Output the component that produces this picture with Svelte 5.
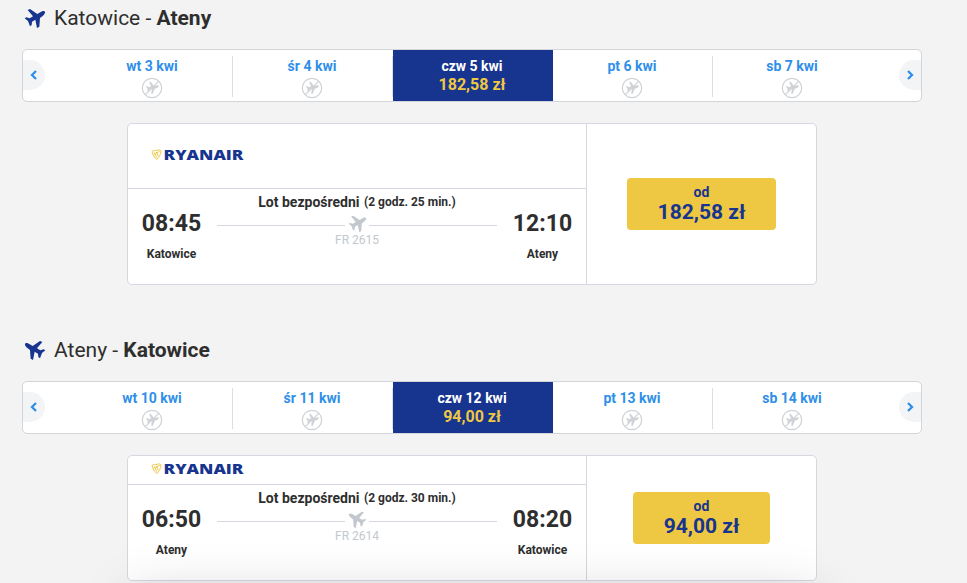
<script>
	const flights = [
		{
			from: 'Katowice',
			to: 'Ateny',
			back: false,
			days: ['wt 3 kwi', 'śr 4 kwi', 'czw 5 kwi', 'pt 6 kwi', 'sb 7 kwi'],
			price: '182,58 zł',
			departure: '08:45',
			arrival: '12:10',
			duration: '2 godz. 25 min.',
			number: 'FR 2615'
		},
		{
			from: 'Ateny',
			to: 'Katowice',
			back: true,
			days: ['wt 10 kwi', 'śr 11 kwi', 'czw 12 kwi', 'pt 13 kwi', 'sb 14 kwi'],
			price: '94,00 zł',
			departure: '06:50',
			arrival: '08:20',
			duration: '2 godz. 30 min.',
			number: 'FR 2614'
		}
	]

	const selected = 2
</script>

{#snippet plane(back)}
	<svg class="plane" class:back viewBox="0 0 66 66">
		<path d="M63 14C61 10 54 12 50 15L40 21 18 6 11 9 27 28 17 34 7 31 2 34 12 42 18 58 23 54 24 44 34 38 39 63 46 59 48 33 57 26C61 22 64 18 63 14z" />
	</svg>
{/snippet}

<main>
	{#each flights as flight}
		<section>
			<h2>
				{@render plane(flight.back)}
				<span>{flight.from} - <b>{flight.to}</b></span>
			</h2>

			<div class="dates">
				<button class="arrow prev" aria-label="prev">
					<svg viewBox="0 0 8 10"><path d="M6 1L2 5l4 4" /></svg>
				</button>
				{#each flight.days as day, i}
					<div class="day" class:selected={i === selected}>
						<span class="name">{day}</span>
						{#if i === selected}
							<span class="day-price">{flight.price}</span>
						{:else}
							<svg class="no-flight" viewBox="0 0 22 22">
								<circle cx="11" cy="11" r="9.700" />
								<g transform="translate(4.300 4.300) scale(.2)">
									<path transform="rotate(18 33 33)" d="M63 14C61 10 54 12 50 15L40 21 18 6 11 9 27 28 17 34 7 31 2 34 12 42 18 58 23 54 24 44 34 38 39 63 46 59 48 33 57 26C61 22 64 18 63 14z" />
								</g>
								<line x1="4.200" y1="17.800" x2="17.800" y2="4.200" />
							</svg>
						{/if}
					</div>
				{/each}
				<button class="arrow next" aria-label="next">
					<svg viewBox="0 0 8 10"><path d="M2 1l4 4-4 4" /></svg>
				</button>
			</div>

			<div class="card" class:compact={flight.back}>
				<div class="details">
					<div class="carrier">
						<svg class="logo" viewBox="0 0 94 24">
							<g class="harp">
								<path d="M1 8.500C2.500 6.800 4 8.200 6 7.300c1.500-.6 3-.3 4 .5C9.800 11.500 8 14.500 5.800 16.500 3.500 14.500 1.800 12 1 8.500z" />
								<path d="M3.200 9.500l2.600 5M5.500 9l1.600 4M3 11l5.500-2.500" />
							</g>
							<text x="12.500" y="16.800" textLength="80" lengthAdjust="spacingAndGlyphs">RYANAIR</text>
						</svg>
					</div>
					<div class="route">
						<div class="stop">
							<span class="time">{flight.departure}</span>
							<span class="city">{flight.from}</span>
						</div>
						<div class="middle">
							<div class="type">Lot bezpośredni <small>({flight.duration})</small></div>
							<div class="line">{@render plane(flight.back)}</div>
							<div class="number">{flight.number}</div>
						</div>
						<div class="stop">
							<span class="time">{flight.arrival}</span>
							<span class="city">{flight.to}</span>
						</div>
					</div>
				</div>
				<div class="buy">
					<button class="price">
						<span>od</span>
						<strong>{flight.price}</strong>
					</button>
				</div>
			</div>
		</section>
	{/each}
</main>
<div class="bottom-bar"></div>

<style>
	:global(body) {
		background: #f3f3f3;
		overflow: hidden;
	}

	main {
		height: 583px;
		overflow: hidden;
		font-family: Roboto, sans-serif;
		color: #2e2e2e;
	}

	section {
		width: 900px;
		height: 332px;
		margin-left: 22px;
	}

	button {
		border: 0;
		padding: 0;
		font-family: inherit;
		cursor: pointer;
	}

	h2 {
		display: flex;
		align-items: center;
		gap: 8px;
		height: 36px;
		margin: 0 0 13px;
		padding-left: 2px;
		font-size: 21px;
		font-weight: 400;
	}

	b {
		font-weight: 700;
	}

	.plane {
		width: 22px;
		height: 22px;
		fill: #17348f;
	}

	.plane.back {
		transform: scaleX(-1);
	}

	.dates {
		position: relative;
		display: flex;
		box-sizing: border-box;
		height: 53px;
		padding-left: 50px;
		border: 1px solid #d2d5d9;
		border-radius: 5px;
		background: #fff;
		overflow: hidden;
	}

	.arrow {
		position: absolute;
		top: 10px;
		display: flex;
		align-items: center;
		width: 22px;
		height: 30px;
		background: #f3f4f6;
	}

	.arrow svg {
		width: 8px;
		height: 10px;
		fill: none;
		stroke: #2f8fe8;
		stroke-width: 2.300;
	}

	.prev {
		left: 0;
		padding-left: 7px;
		border-radius: 0 15px 15px 0;
	}

	.next {
		right: 0;
		padding-left: 7px;
		border-radius: 15px 0 0 15px;
	}

	.day {
		display: flex;
		flex-direction: column;
		align-items: center;
		box-sizing: border-box;
		width: 160px;
		padding: 8px 2px 0 0;
		background: linear-gradient(#dcdfe2, #dcdfe2) 159px 6px / 1px 41px no-repeat;
	}

	.day:nth-child(6) {
		background: none;
	}

	.day.selected {
		background: #17348f;
	}

	.name {
		font-size: 14px;
		font-weight: 700;
		line-height: 17px;
		color: #2f8fe8;
	}

	.selected .name {
		color: #fff;
	}

	.day-price {
		font-size: 16px;
		font-weight: 700;
		line-height: 20px;
		color: #efc843;
	}

	.no-flight {
		width: 22px;
		height: 22px;
		margin-top: 2px;
		fill: #d0d3d6;
	}

	.no-flight circle {
		fill: none;
		stroke: #d0d3d6;
		stroke-width: 1.200;
	}

	.no-flight line {
		stroke: #d0d3d6;
		stroke-width: 1.200;
	}

	.card {
		display: flex;
		box-sizing: border-box;
		width: 690px;
		height: 162px;
		margin: 21px 0 0 105px;
		border: 1px solid #d5d9df;
		border-radius: 5px;
		background: #fff;
	}

	.card.compact {
		height: 126px;
	}

	.details {
		width: 458px;
		border-right: 1px solid #d5d9df;
	}

	.carrier {
		display: flex;
		align-items: center;
		box-sizing: border-box;
		height: 65px;
		padding: 0 0 2px 23px;
		border-bottom: 1px solid #d5d9df;
	}

	.compact .carrier {
		height: 29px;
	}

	.logo {
		width: 94px;
		height: 24px;
	}

	.logo text {
		font-family: "Open Sans", sans-serif;
		font-size: 13.500px;
		font-weight: 800;
		fill: #17348f;
	}

	.harp path {
		fill: none;
		stroke: #efc843;
		stroke-width: 1;
	}

	.route {
		display: flex;
	}

	.stop {
		display: flex;
		flex-direction: column;
		align-items: center;
		width: 87px;
		padding-top: 20px;
	}

	.time {
		font-size: 23px;
		font-weight: 700;
		line-height: 29px;
	}

	.city {
		margin-top: 9px;
		font-size: 12px;
		font-weight: 700;
		line-height: 14px;
	}

	.middle {
		width: 284px;
		padding-top: 5px;
		text-align: center;
	}

	.type {
		height: 18px;
		font-size: 14px;
		font-weight: 700;
		line-height: 17px;
		white-space: nowrap;
	}

	.type small {
		margin-left: 1px;
		font-size: 12px;
		vertical-align: 1px;
	}

	.line {
		display: flex;
		align-items: center;
		gap: 1px;
		height: 26px;
		padding: 0 2px;
	}

	.line::before,
	.line::after {
		content: "";
		flex: 1;
		height: 1px;
		background: #d5d9df;
	}

	.line :global(.plane) {
		width: 19px;
		height: 19px;
		margin: -4px 1px 0 2px;
		fill: #c2c8cd;
	}

	.number {
		margin-top: -5px;
		font-size: 12px;
		line-height: 14px;
		color: #c2c8cd;
	}

	.buy {
		display: flex;
		align-items: center;
		justify-content: center;
		width: 229px;
	}

	.price {
		display: flex;
		flex-direction: column;
		align-items: center;
		height: 52px;
		padding: 6px 31px 0;
		border-radius: 4px;
		background: #efc843;
		color: #17348f;
	}

	.price span {
		font-size: 14px;
		font-weight: 700;
		line-height: 17px;
	}

	.price strong {
		font-size: 21px;
		font-weight: 700;
		line-height: 23px;
	}

	/* shadow cast by the summary bar below the fold */
	.bottom-bar {
		position: fixed;
		top: 592px;
		left: 130px;
		right: 150px;
		height: 60px;
		box-shadow: 0 0 50px rgba(0, 0, 0, 0.17);
		pointer-events: none;
	}
</style>
